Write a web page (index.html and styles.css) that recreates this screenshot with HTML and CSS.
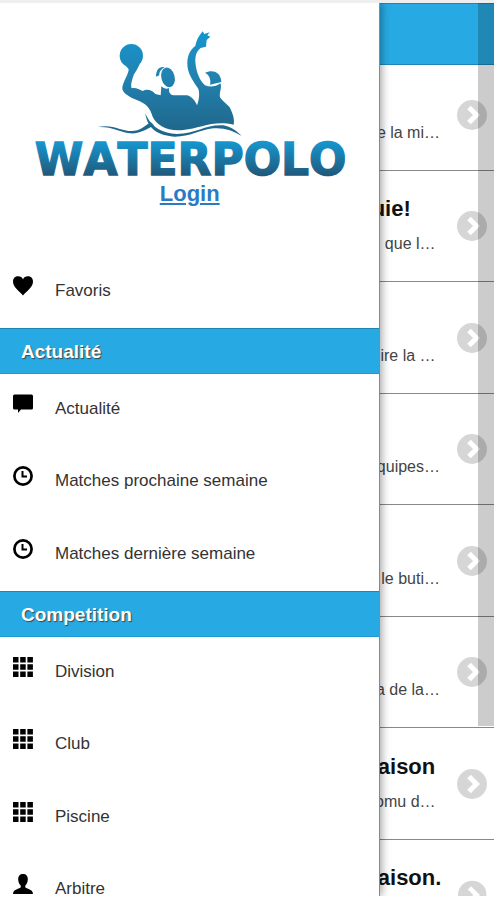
FILE: index.html
```
<!DOCTYPE html>
<html lang="fr">
<head>
    <meta charset="UTF-8">
    <meta name="viewport" content="width=device-width, initial-scale=1.0">
    <title>Waterpolo</title>
    <link rel="stylesheet" href="styles.css">
</head>
<body>

    <!-- Shared icons -->
    <svg class="sprite" aria-hidden="true">
        <symbol id="icon-grid" viewBox="0 0 20 20">
            <path d="M0 0h5.500v5.500H0zM7.200 0h5.500v5.500H7.200zM14.400 0h5.500v5.500h-5.500zM0 7.200h5.500v5.500H0zM7.200 7.200h5.500v5.500H7.200zM14.400 7.200h5.500v5.500h-5.500zM0 14.400h5.500v5.500H0zM7.200 14.400h5.500v5.500H7.200zM14.400 14.400h5.500v5.500h-5.500z"/>
        </symbol>
        <symbol id="icon-clock" viewBox="0 0 20 20">
            <circle cx="10" cy="10" r="8.600" fill="none" stroke="#000" stroke-width="2.700"/>
            <path d="M9.500 5v5.500H14" fill="none" stroke="#000" stroke-width="2"/>
        </symbol>
        <symbol id="icon-arrow" viewBox="0 0 30 30">
            <circle cx="15" cy="15" r="15" fill="#000" fill-opacity=".16"/>
            <path d="M12 7.500l7.500 7.500-7.500 7.500" fill="none" stroke="#fff" stroke-width="5"/>
        </symbol>
    </svg>

    <div class="screen">
        <!-- News page -->
        <div class="page">
            <header class="page-header"></header>
            <ul class="news">
                <li><div class="news-text"><p>e la mi…</p></div><svg class="arrow"><use href="#icon-arrow"/></svg></li>
                <li><div class="news-text"><h2>&nbsp;uie!</h2><p>que l…&nbsp;</p></div><svg class="arrow"><use href="#icon-arrow"/></svg></li>
                <li><div class="news-text"><p>ire la …&nbsp;</p></div><svg class="arrow"><use href="#icon-arrow"/></svg></li>
                <li><div class="news-text"><p>quipes…</p></div><svg class="arrow"><use href="#icon-arrow"/></svg></li>
                <li><div class="news-text"><p>le buti…</p></div><svg class="arrow"><use href="#icon-arrow"/></svg></li>
                <li><div class="news-text"><p>a de la…</p></div><svg class="arrow"><use href="#icon-arrow"/></svg></li>
                <li><div class="news-text"><h2>saison</h2><p>omu d…&nbsp;</p></div><svg class="arrow"><use href="#icon-arrow"/></svg></li>
                <li><div class="news-text"><h2>saison.</h2><p></p></div><svg class="arrow"><use href="#icon-arrow"/></svg></li>
            </ul>
        </div>
        <div class="dismiss"></div>

        <!-- Side menu -->
        <nav class="panel">
            <div class="brand">
                <svg class="logo" viewBox="0 0 1020 480" role="img" aria-label="Waterpolo">
                    <defs>
                        <linearGradient id="players" gradientUnits="userSpaceOnUse" x1="0" y1="40" x2="0" y2="350">
                            <stop offset="0" stop-color="#1495cf"/>
                            <stop offset=".35" stop-color="#2086b6"/>
                            <stop offset="1" stop-color="#206487"/>
                        </linearGradient>
                        <linearGradient id="word" gradientUnits="userSpaceOnUse" x1="0" y1="368" x2="0" y2="466">
                            <stop offset="0" stop-color="#1695cd"/>
                            <stop offset="1" stop-color="#20597b"/>
                        </linearGradient>
                    </defs>
                    <g fill="url(#players)">
                        <circle cx="334" cy="107" r="35"/>
                        <path d="M318 138L360 130C354 146 347 155 342 163C336 180 331 195 335 205C346 202 358 208 368 213C383 205 398 212 406 222L422 226L424 199C432 206 440 208 447 204C446 216 450 224 460 226L502 226C518 232 526 244 531 256C539 236 539 215 534 205C515 178 502 158 502 130C502 105 512 88 526 78C530 60 535 50 548 34L553 42L569 37L562 46L571 50L560 60L558 80L542 84C528 95 524 110 527 135C531 165 543 185 555 196C570 203 588 200 601 190C607 202 597 218 600 232C612 250 628 255 632 268C640 285 644 300 641 314C580 300 540 325 490 330C440 335 410 315 398 290C390 265 382 252 345 238C320 226 306 216 307 203C310 183 325 165 326 148Z"/>
                        <ellipse cx="444" cy="172" rx="20" ry="30" transform="rotate(-14 444 172)"/>
                        <path d="M408 170C408 150 418 138 434 142C422 148 417 158 418 166Z"/>
                        <path d="M555 158C575 148 603 153 604 186L570 194C574 180 568 164 555 158Z"/>
                        <path d="M232 321C280 311 300 333 335 333C360 333 375 318 392 306L402 316C375 332 355 342 330 340C295 336 280 319 232 321Z"/>
                        <path d="M376 280C395 325 430 340 470 342C530 340 560 312 610 316C635 320 655 338 664 347C640 332 610 322 580 325C540 330 510 350 465 350C420 348 382 330 376 280Z"/>
                    </g>
                    <text class="logo-word" x="512" y="464" text-anchor="middle" fill="url(#word)" stroke="url(#word)">WATERPOLO</text>
                </svg>
                <a class="login" href="#">Login</a>
            </div>

            <ul class="menu">
                <li><a href="#">
                    <svg class="icon" viewBox="0 0 20 20"><path d="M10 19.500C7 15.500 0 11.500 0 5.500C0 2 2.500 .3 5 .3C7.500 .3 9.300 1.500 10 3.500C10.700 1.500 12.500 .3 15 .3C17.500 .3 20 2 20 5.500C20 11.500 13 15.500 10 19.500Z"/></svg>
                    <span>Favoris</span></a></li>
            </ul>

            <h3 class="divider">Actualité</h3>
            <ul class="menu">
                <li><a href="#">
                    <svg class="icon" viewBox="0 0 20 20"><path d="M1.500 .5h17a1.500 1.500 0 0 1 1.500 1.500v12a1.500 1.500 0 0 1-1.500 1.500H8L5 19V15.500H1.500A1.500 1.500 0 0 1 0 14V2A1.500 1.500 0 0 1 1.500 .5z"/></svg>
                    <span>Actualité</span></a></li>
                <li><a href="#"><svg class="icon"><use href="#icon-clock"/></svg><span>Matches prochaine semaine</span></a></li>
                <li><a href="#"><svg class="icon"><use href="#icon-clock"/></svg><span>Matches dernière semaine</span></a></li>
            </ul>

            <h3 class="divider">Competition</h3>
            <ul class="menu">
                <li><a href="#"><svg class="icon"><use href="#icon-grid"/></svg><span>Division</span></a></li>
                <li><a href="#"><svg class="icon"><use href="#icon-grid"/></svg><span>Club</span></a></li>
                <li><a href="#"><svg class="icon"><use href="#icon-grid"/></svg><span>Piscine</span></a></li>
                <li><a href="#">
                    <svg class="icon" viewBox="0 0 20 20"><path d="M10 0C13 0 15 2 14.800 5.500C14.700 8.500 13.500 10.500 12.300 11.500V13.500C14.500 15 20 15.500 20 20H0C0 15.500 5.500 15 7.700 13.500V11.500C6.500 10.500 5.300 8.500 5.200 5.500C5 2 7 0 10 0Z"/></svg>
                    <span>Arbitre</span></a></li>
            </ul>
        </nav>
    </div>

</body>
</html>
```
FILE: styles.css
```
/* General Styles */
* { box-sizing: border-box; }
body { font-family: Arial, "Liberation Sans", sans-serif; background-color: #fff; color: #333; margin: 0; border-top: 3px solid #eee; }
ul { list-style: none; margin: 0; padding: 0; }
h2, h3, p { margin: 0; }
.sprite { display: none; }
.screen { position: relative; height: calc(100vh - 7px); overflow: hidden; }

/* News Page */
.page-header { position: relative; z-index: 1; height: 62px; background-color: #27aae3; border-top: 1px solid #1f86b3; border-bottom: 1px solid #1f86b3; }
.news { display: grid; grid-auto-rows: 112px 111px; margin-top: -6px; }
.news li { display: flex; align-items: center; padding: 0 7px 0 74%; border-bottom: 1px solid #888; }
.news-text { flex: 1; height: 100%; display: flex; flex-direction: column; justify-content: flex-end; gap: 8px; padding-bottom: 25px; white-space: nowrap; }
.news h2 { font-size: 22px; line-height: 30px; color: #111; }
.news p { font-size: 16px; line-height: 24px; min-height: 24px; text-align: right; color: #444; }
.arrow { width: 30px; height: 30px; margin-left: 17px; }

/* Shade at the edge of the page */
.dismiss { position: absolute; z-index: 2; top: 0; right: 0; width: 16px; height: 81%; background-color: rgba(0, 0, 0, 0.2); }

/* Side Panel */
.panel { position: absolute; z-index: 3; top: 0; left: 0; width: 77%; height: 100%; background-color: #fff; border-right: 1px solid #888; box-shadow: 2px 0 8px rgba(0, 0, 0, 0.35); overflow: hidden; }
.brand { display: flex; flex-direction: column; align-items: center; padding: 17px 0 49px; }
.logo { width: 340px; height: 160px; overflow: visible; }
.logo-word { font-family: "DejaVu Sans", sans-serif; font-weight: bold; font-size: 132px; font-kerning: none; stroke-width: 4px; }
.login { font-size: 22px; font-weight: bold; line-height: 27px; color: #2a7ac4; }

/* Menu */
.menu { display: grid; grid-auto-rows: 72px 73px; }
.menu a { display: flex; gap: 22px; padding: 20px 13px 0; color: #333; font-size: 17px; line-height: 30px; text-decoration: none; }
.icon { width: 20px; height: 20px; fill: #000; }
.divider { padding: 2px 21px 0; background-color: #27aae3; border-top: 1px solid #1f86b3; border-bottom: 1px solid #1b9cd6; color: #fff; font-size: 19px; line-height: 42px; text-shadow: 1px 1px 1px #444; }
```
